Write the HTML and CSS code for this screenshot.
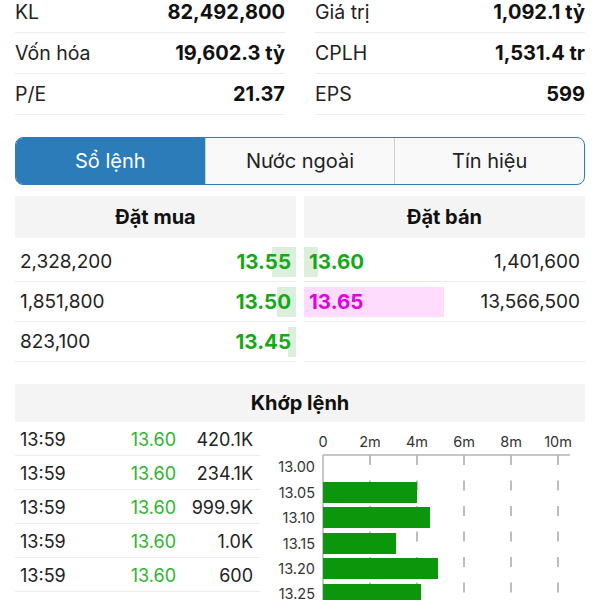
FILE: index.html
```html
<!DOCTYPE html>
<html lang="vi">
<head>
<meta charset="utf-8">
<title>Sổ lệnh</title>
<link rel="stylesheet" href="styles.css">
</head>
<body>
<div class="page">
  <div class="stats">
    <div class="stat"><span class="lbl">KL</span><span class="val">82,492,800</span></div>
    <div class="stat"><span class="lbl">Giá trị</span><span class="val">1,092.1 tỷ</span></div>
    <div class="stat"><span class="lbl">Vốn hóa</span><span class="val">19,602.3 tỷ</span></div>
    <div class="stat"><span class="lbl">CPLH</span><span class="val">1,531.4 tr</span></div>
    <div class="stat"><span class="lbl">P/E</span><span class="val">21.37</span></div>
    <div class="stat"><span class="lbl">EPS</span><span class="val">599</span></div>
  </div>

  <div class="tabs">
    <div class="tab active">Sổ lệnh</div>
    <div class="tab">Nước ngoài</div>
    <div class="tab">Tín hiệu</div>
  </div>

  <div class="book">
    <div class="side bid">
      <div class="head">Đặt mua</div>
      <div class="orow"><span class="obar" style="width:24px"></span><span class="qty">2,328,200</span><span class="px up">13.55</span></div>
      <div class="orow"><span class="obar" style="width:19px"></span><span class="qty">1,851,800</span><span class="px up">13.50</span></div>
      <div class="orow"><span class="obar" style="width:8px"></span><span class="qty">823,100</span><span class="px up">13.45</span></div>
    </div>
    <div class="side ask">
      <div class="head">Đặt bán</div>
      <div class="orow"><span class="obar" style="width:14px"></span><span class="px up">13.60</span><span class="qty">1,401,600</span></div>
      <div class="orow"><span class="obar ceil" style="width:140px"></span><span class="px ceilc">13.65</span><span class="qty">13,566,500</span></div>
      <div class="orow"></div>
    </div>
  </div>

  <div class="match">
    <div class="head">Khớp lệnh</div>
    <div class="match-body">
      <div class="trades">
        <div class="trow"><span class="t">13:59</span><span class="tp">13.60</span><span class="tv">420.1K</span></div>
        <div class="trow"><span class="t">13:59</span><span class="tp">13.60</span><span class="tv">234.1K</span></div>
        <div class="trow"><span class="t">13:59</span><span class="tp">13.60</span><span class="tv">999.9K</span></div>
        <div class="trow"><span class="t">13:59</span><span class="tp">13.60</span><span class="tv">1.0K</span></div>
        <div class="trow"><span class="t">13:59</span><span class="tp">13.60</span><span class="tv">600</span></div>
      </div>
      <svg class="chart" width="315" height="190" viewBox="0 0 315 190">
        <g class="grid">
          <line x1="100" y1="33" x2="100" y2="190"/>
          <line x1="147" y1="33" x2="147" y2="190"/>
          <line x1="194" y1="33" x2="194" y2="190"/>
          <line x1="241" y1="33" x2="241" y2="190"/>
          <line x1="288" y1="33" x2="288" y2="190"/>
        </g>
        <line class="axis" x1="53" y1="33" x2="300" y2="33"/>
        <line class="axis" x1="53" y1="33" x2="53" y2="190"/>
        <g class="xl">
          <text x="53" y="25">0</text>
          <text x="100" y="25">2m</text>
          <text x="147" y="25">4m</text>
          <text x="194" y="25">6m</text>
          <text x="241" y="25">8m</text>
          <text x="288" y="25">10m</text>
        </g>
        <g class="yl">
          <text x="45" y="50">13.00</text>
          <text x="45" y="76">13.05</text>
          <text x="45" y="101">13.10</text>
          <text x="45" y="127">13.15</text>
          <text x="45" y="152">13.20</text>
          <text x="45" y="177">13.25</text>
        </g>
        <g class="bars">
          <rect x="53" y="60" width="94" height="21"/>
          <rect x="53" y="85" width="107" height="21"/>
          <rect x="53" y="111" width="73" height="21"/>
          <rect x="53" y="136" width="115" height="21"/>
          <rect x="53" y="162" width="98" height="21"/>
        </g>
      </svg>
    </div>
  </div>
</div>
</body>
</html>
```
FILE: styles.css
```css
html, body {
  margin: 0;
  padding: 0;
  background: #ffffff;
}
body {
  font-family: Inter, "Noto Sans", "Liberation Sans", sans-serif;
  color: #222;
  width: 600px;
  height: 600px;
  overflow: hidden;
}
.page {
  padding: 0 15px;
}
.stats {
  display: grid;
  grid-template-columns: 1fr 1fr;
  column-gap: 30px;
  margin-top: -8px;
}
.stat {
  height: 40px;
  border-bottom: 1px solid #ececec;
  display: flex;
  align-items: center;
  justify-content: space-between;
  font-size: 19.5px;
}
.lbl {
  color: #222;
}
.val {
  font-weight: 700;
  font-size: 20px;
  color: #111;
}
.tabs {
  margin-top: 22px;
  height: 48px;
  box-sizing: border-box;
  border: 1.5px solid #2c7cba;
  border-radius: 8px;
  overflow: hidden;
  display: flex;
  background: #f9f9f9;
}
.tab {
  flex: 1;
  display: flex;
  align-items: center;
  justify-content: center;
  font-size: 20px;
  color: #222;
  border-left: 1px solid #cfcfcf;
}
.tab:first-child {
  border-left: none;
}
.tab.active {
  background: #2c7cba;
  color: #ffffff;
}
.book {
  margin-top: 11px;
  display: grid;
  grid-template-columns: 1fr 1fr;
  column-gap: 8px;
}
.head {
  height: 42px;
  background: #f4f4f4;
  display: flex;
  align-items: center;
  justify-content: center;
  font-weight: 700;
  font-size: 20px;
  color: #111;
  margin-bottom: 4px;
}
.orow {
  position: relative;
  height: 40px;
  box-sizing: border-box;
  border-bottom: 1px solid #ececec;
  display: flex;
  align-items: center;
  justify-content: space-between;
  font-size: 19px;
  padding: 0 5px;
}
.obar {
  position: absolute;
  top: 5px;
  height: 30px;
  background: #dcefdc;
}
.bid .obar { right: 0; }
.ask .obar { left: 0; }
.obar.ceil { background: #fddcfd; }
.qty {
  position: relative;
  color: #222;
}
.px {
  position: relative;
  font-weight: 700;
  font-size: 20.5px;
}
.px.up { color: #17a817; }
.px.ceilc { color: #e000e0; }
.match {
  margin-top: 22px;
}
.match .head {
  height: 38px;
  margin-bottom: 0;
}
.match-body {
  display: flex;
  gap: 10px;
}
.trades {
  width: 245px;
}
.trow {
  height: 34px;
  box-sizing: border-box;
  border-bottom: 1px solid #ececec;
  display: flex;
  align-items: center;
  font-size: 18px;
  padding: 2px 7px 0 5px;
}
.t {
  flex: 1;
  color: #222;
}
.tp {
  color: #2cb52c;
  width: 60px;
  text-align: right;
}
.tv {
  width: 77px;
  text-align: right;
  color: #222;
}
.chart {
  display: block;
  flex: none;
}
.chart text {
  font-family: Inter, "Noto Sans", "Liberation Sans", sans-serif;
  font-size: 14.5px;
  fill: #333;
}
.xl text { text-anchor: middle; }
.yl text { text-anchor: end; }
.axis {
  stroke: #b5b5b5;
  stroke-width: 1.5;
}
.grid line {
  stroke: #a8a8a8;
  stroke-width: 1.5;
  stroke-dasharray: 10 15.5;
}
.bars rect {
  fill: #0b960b;
}
```
